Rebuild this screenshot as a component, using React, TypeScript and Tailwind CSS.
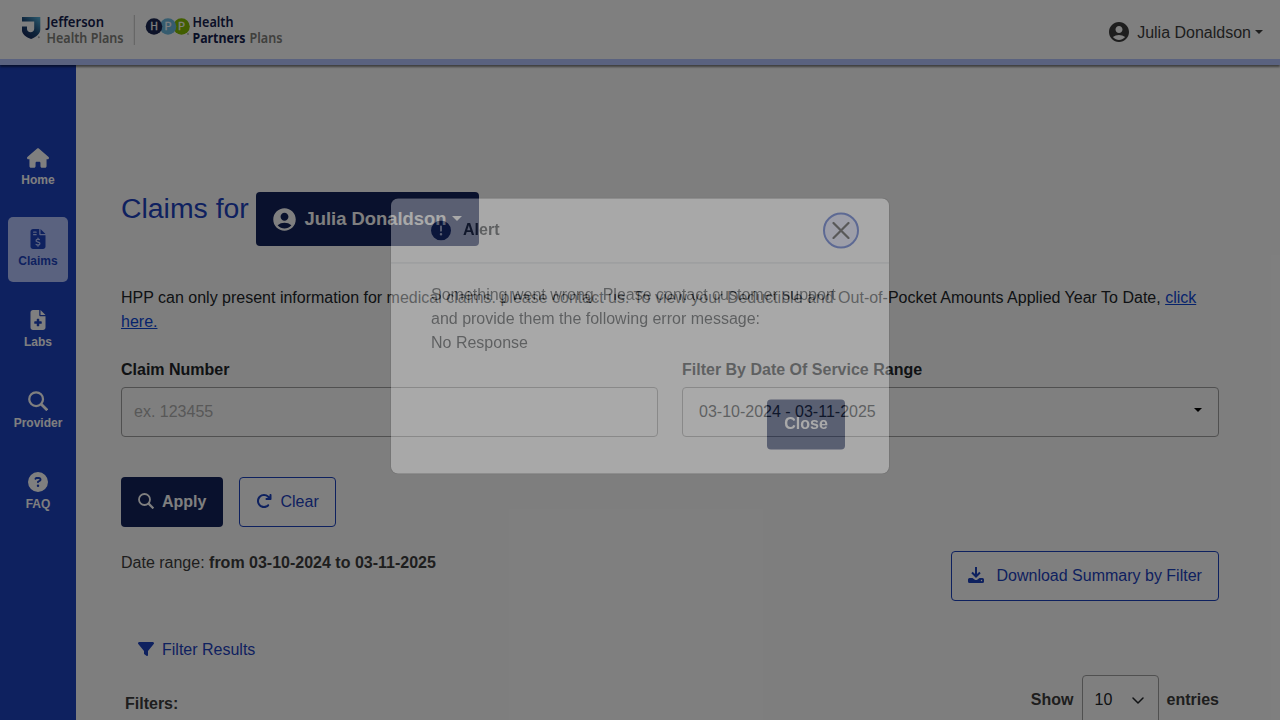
import type { ReactNode } from "react";
import {
  FaHouse,
  FaFileInvoiceDollar,
  FaFileMedical,
  FaCircleQuestion,
  FaFilter,
  FaCircleExclamation,
  FaArrowRotateRight,
} from "react-icons/fa6";
import { MdAccountCircle } from "react-icons/md";

function Caret({ className = "" }: { className?: string }) {
  return (
    <span
      className={`inline-block h-0 w-0 border-x-[4.8px] border-t-[4.8px] border-x-transparent ${className}`}
    />
  );
}

function Logo() {
  return (
    <svg
      width="270"
      height="40"
      viewBox="0 0 270 40"
      fontFamily="'Noto Sans', sans-serif"
      fontSize="14"
      className="block"
    >
      <defs>
        <linearGradient id="shield" x1="1" y1="0" x2="0.2" y2="1">
          <stop offset="0" stopColor="#59b7df" />
          <stop offset="0.55" stopColor="#1d4a78" />
          <stop offset="1" stopColor="#152456" />
        </linearGradient>
      </defs>
      <path
        d="M2 5h18.300v12.500c0 4-4 7.500-9.200 9.500-5-1.500-9.100-5-9.100-8.500V14.500h5v2.500c0 1.800 1.600 3.200 3.600 3.200s3.600-1.400 3.600-3.200v-7.500H2z"
        fill="url(#shield)"
      />
      <circle cx="18.800" cy="25.200" r="1" fill="#aaa" />
      <text x="26.500" y="15" fill="#14204e" fontWeight="600" textLength="57.500" lengthAdjust="spacingAndGlyphs">
        Jefferson
      </text>
      <text x="26.500" y="31" fill="#80807a" fontWeight="600" textLength="77" lengthAdjust="spacingAndGlyphs">
        Health Plans
      </text>
      <path d="M114.300 3v30" stroke="#c4c4c4" strokeWidth="1" />
      <circle cx="161.500" cy="14.500" r="8.300" fill="#84bd00" />
      <circle cx="148" cy="14.500" r="8.300" fill="#6cb9df" />
      <circle cx="134" cy="14.500" r="8.300" fill="#1b2752" />
      <circle cx="168" cy="22" r="0.900" fill="#aaa" />
      <g fill="#fff" fontSize="10" textAnchor="middle" fontWeight="500" fontFamily="'Liberation Sans', sans-serif" stroke="#fff" strokeWidth="0.300">
        <text x="134" y="18">H</text>
        <text x="148" y="18">P</text>
        <text x="161.500" y="18">P</text>
      </g>
      <text x="172.500" y="15" fill="#14204e" fontWeight="600" textLength="41" lengthAdjust="spacingAndGlyphs">
        Health
      </text>
      <text x="172.500" y="31" fill="#14204e" fontWeight="700" textLength="53" lengthAdjust="spacingAndGlyphs">
        Partners
      </text>
      <text x="229.500" y="31" fill="#80807a" fontWeight="600" textLength="33" lengthAdjust="spacingAndGlyphs">
        Plans
      </text>
    </svg>
  );
}

function NavItem({ icon, label, active = false }: { icon: ReactNode; label: string; active?: boolean }) {
  return (
    <a
      className={`flex h-[65px] w-[60px] flex-col items-center rounded-[5px] pt-3 text-[12px] leading-[18px] font-bold ${
        active ? "bg-[#b4c5ff] text-[#1d42bf]" : "text-white"
      }`}
    >
      <span className="flex h-5 items-center">{icon}</span>
      <span className="mt-[3px]">{label}</span>
    </a>
  );
}

function SearchIcon({ size = 16, className = "" }: { size?: number; className?: string }) {
  return (
    <svg
      width={size}
      height={size}
      viewBox="0 0 16 16"
      fill="none"
      stroke="currentColor"
      strokeWidth="1.800"
      className={className}
    >
      <circle cx="6.500" cy="6.500" r="5.500" />
      <path d="M10.400 10.400l5 5" strokeWidth="2.200" />
    </svg>
  );
}

function DownloadIcon() {
  return (
    <svg width="16" height="16" viewBox="0 0 16 16" className="mb-0.5">
      <path d="M8 0v9M4 5.500l4 4 4-4" fill="none" stroke="currentColor" strokeWidth="2" />
      <path
        d="M1.500 11h3l2 1.600q1.500 1 3 0l2-1.600h3A1.500 1.500 0 0 1 16 12.500v2a1.500 1.500 0 0 1-1.500 1.500h-13A1.500 1.500 0 0 1 0 14.500v-2A1.500 1.500 0 0 1 1.500 11zM13.500 12.800a.7.700 0 1 0 0 1.400.7.700 0 0 0 0-1.400z"
        fill="currentColor"
        fillRule="evenodd"
      />
    </svg>
  );
}

export default function App() {
  return (
    <div className="relative flex h-[720px] w-[1280px] flex-col overflow-hidden bg-[#fdfdfd] font-['Liberation_Sans',sans-serif] text-[16px] leading-6 text-[#212529]">
      <header className="z-10 flex h-[65px] shrink-0 items-start justify-between border-b-[6px] border-[#b4c5ff] bg-white pr-[17px] pl-5 shadow-[0_2px_2px_rgba(0,0,0,0.5)]">
        <div className="pt-3">
          <Logo />
        </div>
        <div className="flex items-center pt-5 text-[#3c3c3c]">
          <MdAccountCircle size={24} />
          <span className="mt-px -mb-px ml-[6px]">Julia Donaldson</span>
          <Caret className="ml-1" />
        </div>
      </header>

      <div className="flex min-h-0 flex-1">
        <nav className="flex w-[76px] shrink-0 flex-col items-center gap-4 bg-[#1d42bf] pt-[71px]">
          <NavItem icon={<FaHouse size={22} />} label="Home" />
          <NavItem icon={<FaFileInvoiceDollar size={20} />} label="Claims" active />
          <NavItem icon={<FaFileMedical size={20} />} label="Labs" />
          <NavItem icon={<SearchIcon size={20} />} label="Provider" />
          <NavItem icon={<FaCircleQuestion size={20} />} label="FAQ" />
        </nav>

        <main className="flex flex-1 flex-col pt-[127px] pr-[61px] pl-[45px]">
          <div className="flex h-[54px] items-start">
            <h1 className="w-[135px] text-[28.400px] leading-[32px] whitespace-nowrap text-[#1d42bf]">Claims for</h1>
            <button className="flex h-[54px] w-[223px] items-center rounded bg-[#12225a] pl-[15px] text-[18.400px] font-bold text-white">
              <MdAccountCircle size={27} />
              <span className="ml-[6.500px] whitespace-nowrap">Julia Donaldson</span>
              <span className="mb-0.5 ml-[5.500px] inline-block h-0 w-0 border-x-[5.500px] border-t-[5.500px] border-x-transparent" />
            </button>
          </div>

          <p className="mt-10">
            HPP can only present information for medical claims. please contact us. To view your Deductible and
            Out-of-Pocket Amounts Applied Year To Date, <a className="text-[#0d47d9] underline">click here.</a>
          </p>

          <div className="mt-6 grid grid-cols-2 gap-6">
            <div>
              <div className="font-bold">Claim Number</div>
              <div className="mt-[5px] flex h-[50px] items-center rounded border border-[#a0a0a0] bg-white px-3 text-[#b0b0b0]">
                ex. 123455
              </div>
            </div>
            <div>
              <div className="font-bold">Filter By Date Of Service Range</div>
              <div className="mt-[5px] flex h-[50px] items-center justify-between rounded border border-[#a0a0a0] bg-white px-4">
                <span>03-10-2024 - 03-11-2025</span>
                <Caret className="mb-[5px] text-black" />
              </div>
            </div>
          </div>

          <div className="mt-10 flex gap-4">
            <button className="flex h-[50px] w-[102px] items-center rounded bg-[#12225a] pl-[17px] font-bold text-white">
              <SearchIcon className="mb-0.5" />
              <span className="ml-2">Apply</span>
            </button>
            <button className="flex h-[50px] w-[97px] items-center rounded border border-[#1d42bf] bg-white pl-4 text-[#1d42bf]">
              <FaArrowRotateRight size={16} className="mb-0.5" />
              <span className="ml-[8.500px]">Clear</span>
            </button>
          </div>

          <div className="mt-6 flex items-start justify-between text-[#3c3c3c]">
            <div>
              Date range: <b>from 03-10-2024 to 03-11-2025</b>
            </div>
            <button className="flex h-[50px] w-[268px] items-center rounded border border-[#1d42bf] bg-white pl-4 text-[#1d42bf]">
              <DownloadIcon />
              <span className="ml-[12.500px]">Download Summary by Filter</span>
            </button>
          </div>

          <div className="mt-[37px] flex items-center pl-[17px] text-[#1d42bf]">
            <FaFilter size={16} className="mb-0.5" />
            <span className="ml-2">Filter Results</span>
          </div>

          <div className="mt-[13px] flex shrink-0 items-center justify-between font-bold text-[#3c3c3c]">
            <span className="mt-2 pl-1">Filters:</span>
            <div className="flex items-center gap-2">
              <span>Show</span>
              <div className="flex h-[50px] w-[77px] items-center justify-between rounded border border-[#a0a0a0] bg-white pr-[14px] pl-3 font-normal text-[#212529]">
                10
                <svg width="12" height="7" viewBox="0 0 12 7" fill="none" stroke="currentColor" strokeWidth="1.500">
                  <path d="M1 1l5 5 5-5" strokeLinecap="round" strokeLinejoin="round" />
                </svg>
              </div>
              <span>entries</span>
            </div>
          </div>
        </main>
      </div>

      <div className="absolute inset-0 z-20 bg-black/50" />

      <div
        role="dialog"
        className="absolute top-[197px] left-[390px] z-30 h-[277px] w-[500px] translate-y-[0.450px] rounded-lg border border-black/20 bg-white bg-clip-padding opacity-[0.33] will-change-transform"
      >
        <div className="flex h-[65px] items-center border-b border-[#c9cdd2] pr-[30px] pl-10">
          <FaCircleExclamation size={20} className="text-[#12225a]" />
          <span className="ml-3 font-bold">Alert</span>
          <span className="ml-auto flex h-9 w-9 items-center justify-center rounded-full border-2 border-[#1d42bf] bg-[#dce1ff]">
            <svg width="18" height="18" viewBox="0 0 18 18" stroke="#111" strokeWidth="2.200" strokeLinecap="round">
              <path d="M1.500 1.500l15 15M16.500 1.500l-15 15" />
            </svg>
          </span>
        </div>
        <div className="pt-5 pl-10">
          Something went wrong. Please contact customer support
          <br />
          and provide them the following error message:
          <br />
          No Response
        </div>
        <div className="mt-[44px] flex justify-end pr-[44px]">
          <button className="h-[50px] w-[78px] rounded bg-[#12225a] font-bold text-white">Close</button>
        </div>
      </div>
    </div>
  );
}
